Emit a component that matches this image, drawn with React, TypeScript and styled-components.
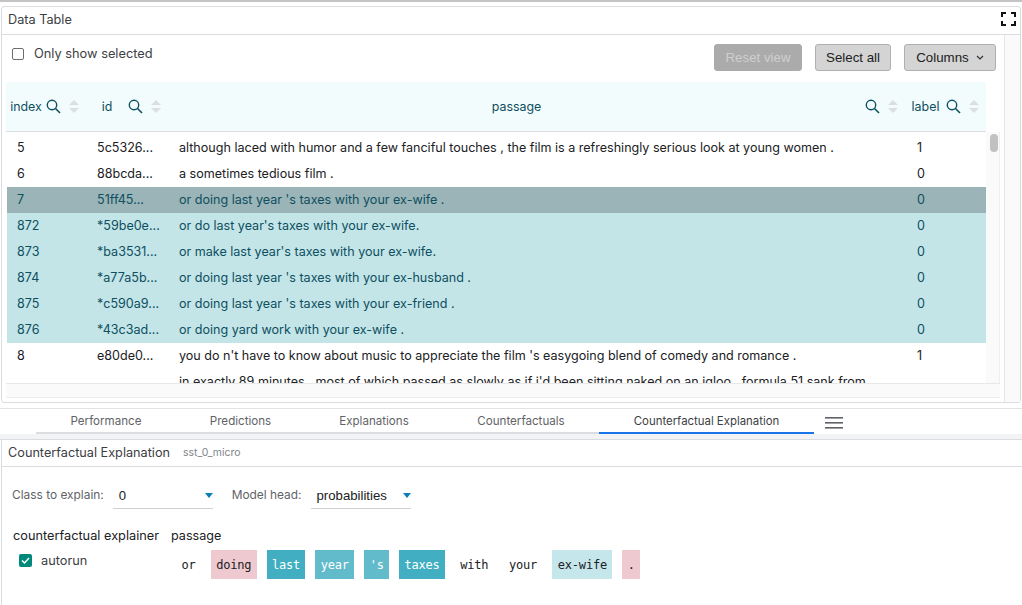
import React from "react";
import styled, { createGlobalStyle } from "styled-components";

const Global = createGlobalStyle`
  html, body { margin: 0; padding: 0; background: #fff; }
  body { font-family: Inter, "Liberation Sans", sans-serif; color: #202124; width: 1022px; height: 605px; overflow: hidden; }
`;

const Page = styled.div`
  display: flex;
  flex-direction: column;
  width: 1022px;
  height: 605px;
  overflow: hidden;
`;
const TopEdge = styled.div`
  height: 2px;
  background: #c4c4c4;
  margin-bottom: 4px;
  flex: none;
`;
const TablePanel = styled.section`
  margin: 0 1px;
  width: 1020px;
  box-sizing: border-box;
  height: 397px;
  flex: none;
  border: 1px solid #dadce0;
  border-radius: 3px;
  display: flex;
  flex-direction: column;
`;
const PanelHeader = styled.header`
  height: 28px;
  flex: none;
  box-sizing: border-box;
  border-bottom: 1px solid #dadce0;
  display: flex;
  align-items: center;
  justify-content: space-between;
  padding: 0 4px 3px 6px;
`;
const PanelTitle = styled.span`
  font-size: 12.7px;
  color: #3c4043;
`;
const PanelBody = styled.div`
  flex: 1;
  display: flex;
  min-height: 0;
`;
const MainColumn = styled.div`
  width: 1003px;
  box-sizing: border-box;
  border-right: 1px solid #e6e6e6;
  padding-left: 4px;
  display: flex;
  flex-direction: column;
`;
const SideTrack = styled.div`
  flex: 1;
  background: #fafafa;
`;
const Toolbar = styled.div`
  height: 47px;
  flex: none;
  display: flex;
  align-items: flex-start;
  justify-content: space-between;
  padding-right: 8px;
`;
const ShowSelected = styled.label`
  display: flex;
  align-items: center;
  gap: 10px;
  margin: 11px 0 0 6px;
  font-size: 12.8px;
  color: #3c4043;
`;
const EmptyBox = styled.span`
  width: 10px;
  height: 10px;
  border: 1px solid #6e6e6e;
  border-radius: 2px;
  display: block;
`;
const Buttons = styled.div`
  display: flex;
  gap: 13px;
  padding-top: 9px;
`;
const Button = styled.button<{ $disabled?: boolean; $w: number }>`
  height: 27px;
  box-sizing: border-box;
  padding: 0;
  width: ${(p) => p.$w}px;
  border: 1px solid ${(p) => (p.$disabled ? "#ababab" : "#b0b0b0")};
  border-radius: 3px;
  background: ${(p) => (p.$disabled ? "#ababab" : "#d4d4d4")};
  color: ${(p) => (p.$disabled ? "#cfcfcf" : "#202020")};
  font: 13.3px "Liberation Sans", sans-serif;
  display: flex;
  align-items: center;
  justify-content: center;
  gap: 7px;
`;
const TableWrap = styled.div`
  display: flex;
  flex-direction: column;
  width: 994px;
`;
const HeadRow = styled.div`
  display: grid;
  grid-template-columns: 80px 82px 737px 81px;
  width: 980px;
  height: 50px;
  box-sizing: border-box;
  background: #f3fcfc;
  border-bottom: 1px solid #dadce0;
`;
const HeadCell = styled.div`
  display: flex;
  align-items: center;
  padding-right: 7px;
  color: #0e4f60;
  font-size: 12.4px;
`;
const HeadLabel = styled.span`
  flex: 1;
  text-align: center;
  white-space: nowrap;
`;
const HeadIcons = styled.span`
  display: flex;
  align-items: center;
  gap: 8px;
`;
const BodyArea = styled.div`
  display: flex;
  height: 251px;
  flex: none;
`;
const Rows = styled.div`
  width: 980px;
  height: 251px;
  box-sizing: border-box;
  padding: 3px 0 0 1px;
  overflow: hidden;
`;
const VTrack = styled.div`
  width: 14px;
  background: #fafafa;
  border-right: 1px solid #eeeeee;
  box-sizing: border-box;
  padding: 2px 2px 0 4px;
`;
const Thumb = styled.div`
  width: 8px;
  height: 18px;
  border-radius: 4px;
  background: #c1c1c1;
`;
const HTrack = styled.div`
  height: 15px;
  width: 994px;
  flex: none;
  box-sizing: border-box;
  background: #fafafa;
  border-top: 1px solid #e8e8e8;
  border-bottom: 1px solid #eeeeee;
`;
const Row = styled.div<{ $kind?: "primary" | "related" }>`
  display: grid;
  grid-template-columns: 79px 82px 738px 80px;
  height: 26px;
  box-sizing: border-box;
  padding-bottom: 1px;
  align-items: center;
  font-size: 12.55px;
  background: ${(p) => (p.$kind === "primary" ? "#9bb4b7" : p.$kind === "related" ? "#c3e5e8" : "transparent")};
  color: ${(p) => (p.$kind ? "#0e4f60" : "#202124")};
`;
const Cell = styled.div`
  padding-left: 11px;
  white-space: nowrap;
  overflow: hidden;
`;
const IndexCell = styled(Cell)`
  padding-left: 10px;
`;
const TabBar = styled.nav`
  margin-top: 5px;
  flex: none;
  height: 32px;
  box-sizing: border-box;
  border-top: 1px solid #e3e3e3;
  border-bottom: 1px solid #dadce0;
  display: flex;
  background: #f1f3f4;
`;
const TabStrip = styled.div`
  display: flex;
  align-items: stretch;
  height: 25px;
  background: #fff;
  flex: 1;
  padding-left: 36px;
`;
const Tab = styled.div<{ $active?: boolean; $w: number }>`
  width: ${(p) => p.$w}px;
  height: 23px;
  display: flex;
  align-items: center;
  justify-content: center;
  font-size: ${(p) => (p.$active ? "11.4px" : "11.6px")};
  color: ${(p) => (p.$active ? "#3c4043" : "#5f6368")};
  border-bottom: 2px solid ${(p) => (p.$active ? "#1a73e8" : "#dadce0")};
`;
const MenuIcon = styled.div`
  margin-left: 11px;
  padding-top: 5px;
`;
const ExplainPanel = styled.section`
  flex: 1;
  margin-left: 1px;
  border-left: 1px solid #dadce0;
  display: flex;
  flex-direction: column;
`;
const ExplainHeader = styled.header`
  height: 27px;
  flex: none;
  box-sizing: border-box;
  border-bottom: 1px solid #dadce0;
  display: flex;
  align-items: center;
  gap: 13px;
  padding: 0 0 2px 6px;
`;
const SubTitle = styled.span`
  font-size: 10.4px;
  color: #80868b;
`;
const Controls = styled.div`
  display: flex;
  align-items: flex-start;
  padding: 15px 0 0 10px;
  height: 42px;
`;
const FieldLabel = styled.span`
  font-size: 11.9px;
  line-height: 26px;
  color: #5f6368;
`;
const SelectBox = styled.div<{ $w: number; $gapRight: number }>`
  width: ${(p) => p.$w}px;
  height: 27px;
  box-sizing: border-box;
  margin: 0 ${(p) => p.$gapRight}px 0 9px;
  padding: 0 0 0 6px;
  border-bottom: 1px solid #d0d0d0;
  display: flex;
  align-items: center;
  justify-content: space-between;
  font: 13.2px "Liberation Sans", sans-serif;
  color: #202124;
`;
const Arrow = styled.span`
  width: 0;
  height: 0;
  border-left: 4.5px solid transparent;
  border-right: 4.5px solid transparent;
  border-top: 5px solid #0b7fb5;
`;
const Explainer = styled.div`
  display: flex;
  padding: 4px 0 0 11px;
`;
const ExplainerSide = styled.div`
  width: 158px;
  font-size: 12.75px;
  color: #202124;
`;
const SideHeading = styled.div`
  line-height: 16px;
  white-space: nowrap;
`;
const Autorun = styled.label`
  display: flex;
  align-items: center;
  gap: 9px;
  margin: 9px 0 0 6px;
  color: #3c4043;
`;
const CheckBox = styled.span`
  width: 13px;
  height: 13px;
  border-radius: 2px;
  background: #00897b;
  display: flex;
  align-items: center;
  justify-content: center;
`;
const PassageHeading = styled.div`
  font-size: 12.6px;
  line-height: 16px;
  margin-bottom: 6px;
`;
const Tokens = styled.div`
  display: flex;
  gap: 10px;
  margin-left: 5px;
`;
const Token = styled.span<{ $bg?: string; $light?: boolean }>`
  height: 29px;
  display: flex;
  align-items: center;
  padding: 0 5.4px;
  font: 12px "DejaVu Sans Mono", monospace;
  letter-spacing: -0.22px;
  background: ${(p) => p.$bg ?? "transparent"};
  color: ${(p) => (p.$light ? "#fff" : "#202124")};
`;

const SearchIcon = () => (
  <svg width="15" height="15" viewBox="0 0 15 15" fill="none" stroke="#0e4f60" strokeWidth="1.4">
    <circle cx="6" cy="6" r="4.7" />
    <path d="M9.5 9.5 L14 14" strokeWidth="1.6" />
  </svg>
);
const SortIcon = () => (
  <svg width="10" height="15" viewBox="0 0 10 15" fill="#dcdfdf">
    <path d="M5 1 L10 6 H0 Z" />
    <path d="M5 14 L10 9 H0 Z" />
  </svg>
);
const Expand = () => (
  <svg width="15" height="14" viewBox="0 0 15 14" fill="none" stroke="#111" strokeWidth="2">
    <path d="M1 5 V1 H5 M10 1 H14 V5 M14 9 V13 H10 M5 13 H1 V9" />
  </svg>
);
const Chevron = () => (
  <svg width="8" height="5" viewBox="0 0 8 5" fill="none" stroke="#303030" strokeWidth="1.2">
    <path d="M1 1 L4 4 L7 1" />
  </svg>
);
const Burger = () => (
  <svg width="18" height="14" viewBox="0 0 18 14" fill="#5f6368">
    <rect y="1" width="18" height="1.6" />
    <rect y="6" width="18" height="1.6" />
    <rect y="11" width="18" height="1.6" />
  </svg>
);
const Tick = () => (
  <svg width="11" height="11" viewBox="0 0 11 11" fill="none" stroke="#fff" strokeWidth="1.5">
    <path d="M2 5.5 L4.5 8 L9 3" />
  </svg>
);

const Head = ({ label }: { label: string }) => (
  <HeadCell>
    <HeadLabel>{label}</HeadLabel>
    <HeadIcons>
      <SearchIcon />
      <SortIcon />
    </HeadIcons>
  </HeadCell>
);

const rows: { i: string; id: string; p: string; l: string; k?: "primary" | "related" }[] = [
  { i: "5", id: "5c5326...", p: "although laced with humor and a few fanciful touches , the film is a refreshingly serious look at young women .", l: "1" },
  { i: "6", id: "88bcda...", p: "a sometimes tedious film .", l: "0" },
  { i: "7", id: "51ff45...", p: "or doing last year 's taxes with your ex-wife .", l: "0", k: "primary" },
  { i: "872", id: "*59be0e...", p: "or do last year's taxes with your ex-wife.", l: "0", k: "related" },
  { i: "873", id: "*ba3531...", p: "or make last year's taxes with your ex-wife.", l: "0", k: "related" },
  { i: "874", id: "*a77a5b...", p: "or doing last year 's taxes with your ex-husband .", l: "0", k: "related" },
  { i: "875", id: "*c590a9...", p: "or doing last year 's taxes with your ex-friend .", l: "0", k: "related" },
  { i: "876", id: "*43c3ad...", p: "or doing yard work with your ex-wife .", l: "0", k: "related" },
  { i: "8", id: "e80de0...", p: "you do n't have to know about music to appreciate the film 's easygoing blend of comedy and romance .", l: "1" },
  { i: "9", id: "", p: "in exactly 89 minutes , most of which passed as slowly as if i'd been sitting naked on an igloo , formula 51 sank from", l: "" },
];

const tabs = [
  { t: "Performance", w: 140 },
  { t: "Predictions", w: 129 },
  { t: "Explanations", w: 138 },
  { t: "Counterfactuals", w: 156 },
];

const PINK = "#eec9d0";
const DARK = "#41afc1";
const MID = "#62bbcb";
const PALE = "#c5e6ea";
const tokens: { t: string; bg?: string; light?: boolean }[] = [
  { t: "or" },
  { t: "doing", bg: PINK },
  { t: "last", bg: DARK, light: true },
  { t: "year", bg: MID, light: true },
  { t: "'s", bg: MID, light: true },
  { t: "taxes", bg: DARK, light: true },
  { t: "with" },
  { t: "your" },
  { t: "ex-wife", bg: PALE },
  { t: ".", bg: PINK },
];

export default function App() {
  return (
    <Page>
      <Global />
      <TopEdge />
      <TablePanel>
        <PanelHeader>
          <PanelTitle>Data Table</PanelTitle>
          <Expand />
        </PanelHeader>
        <PanelBody>
          <MainColumn>
            <Toolbar>
              <ShowSelected>
                <EmptyBox />
                Only show selected
              </ShowSelected>
              <Buttons>
                <Button $disabled $w={88}>Reset view</Button>
                <Button $w={76}>Select all</Button>
                <Button $w={92}>Columns <Chevron /></Button>
              </Buttons>
            </Toolbar>
            <TableWrap>
              <HeadRow>
                <Head label="index" />
                <Head label="id" />
                <Head label="passage" />
                <Head label="label" />
              </HeadRow>
              <BodyArea>
                <Rows>
                  {rows.map((r) => (
                    <Row key={r.i} $kind={r.k}>
                      <IndexCell>{r.i === "9" ? "" : r.i}</IndexCell>
                      <Cell>{r.id}</Cell>
                      <Cell>{r.p}</Cell>
                      <Cell>{r.l}</Cell>
                    </Row>
                  ))}
                </Rows>
                <VTrack><Thumb /></VTrack>
              </BodyArea>
              <HTrack />
            </TableWrap>
          </MainColumn>
          <SideTrack />
        </PanelBody>
      </TablePanel>
      <TabBar>
        <TabStrip>
          {tabs.map((t) => (
            <Tab key={t.t} $w={t.w}>{t.t}</Tab>
          ))}
          <Tab $active $w={215}>Counterfactual Explanation</Tab>
          <MenuIcon><Burger /></MenuIcon>
        </TabStrip>
      </TabBar>
      <ExplainPanel>
        <ExplainHeader>
          <PanelTitle>Counterfactual Explanation</PanelTitle>
          <SubTitle>sst_0_micro</SubTitle>
        </ExplainHeader>
        <Controls>
          <FieldLabel>Class to explain:</FieldLabel>
          <SelectBox $w={100} $gapRight={19}>0<Arrow /></SelectBox>
          <FieldLabel>Model head:</FieldLabel>
          <SelectBox $w={100} $gapRight={0}>probabilities<Arrow /></SelectBox>
        </Controls>
        <Explainer>
          <ExplainerSide>
            <SideHeading>counterfactual explainer</SideHeading>
            <Autorun><CheckBox><Tick /></CheckBox>autorun</Autorun>
          </ExplainerSide>
          <div>
            <PassageHeading>passage</PassageHeading>
            <Tokens>
              {tokens.map((t, i) => (
                <Token key={i} $bg={t.bg} $light={t.light}>{t.t}</Token>
              ))}
            </Tokens>
          </div>
        </Explainer>
      </ExplainPanel>
    </Page>
  );
}
